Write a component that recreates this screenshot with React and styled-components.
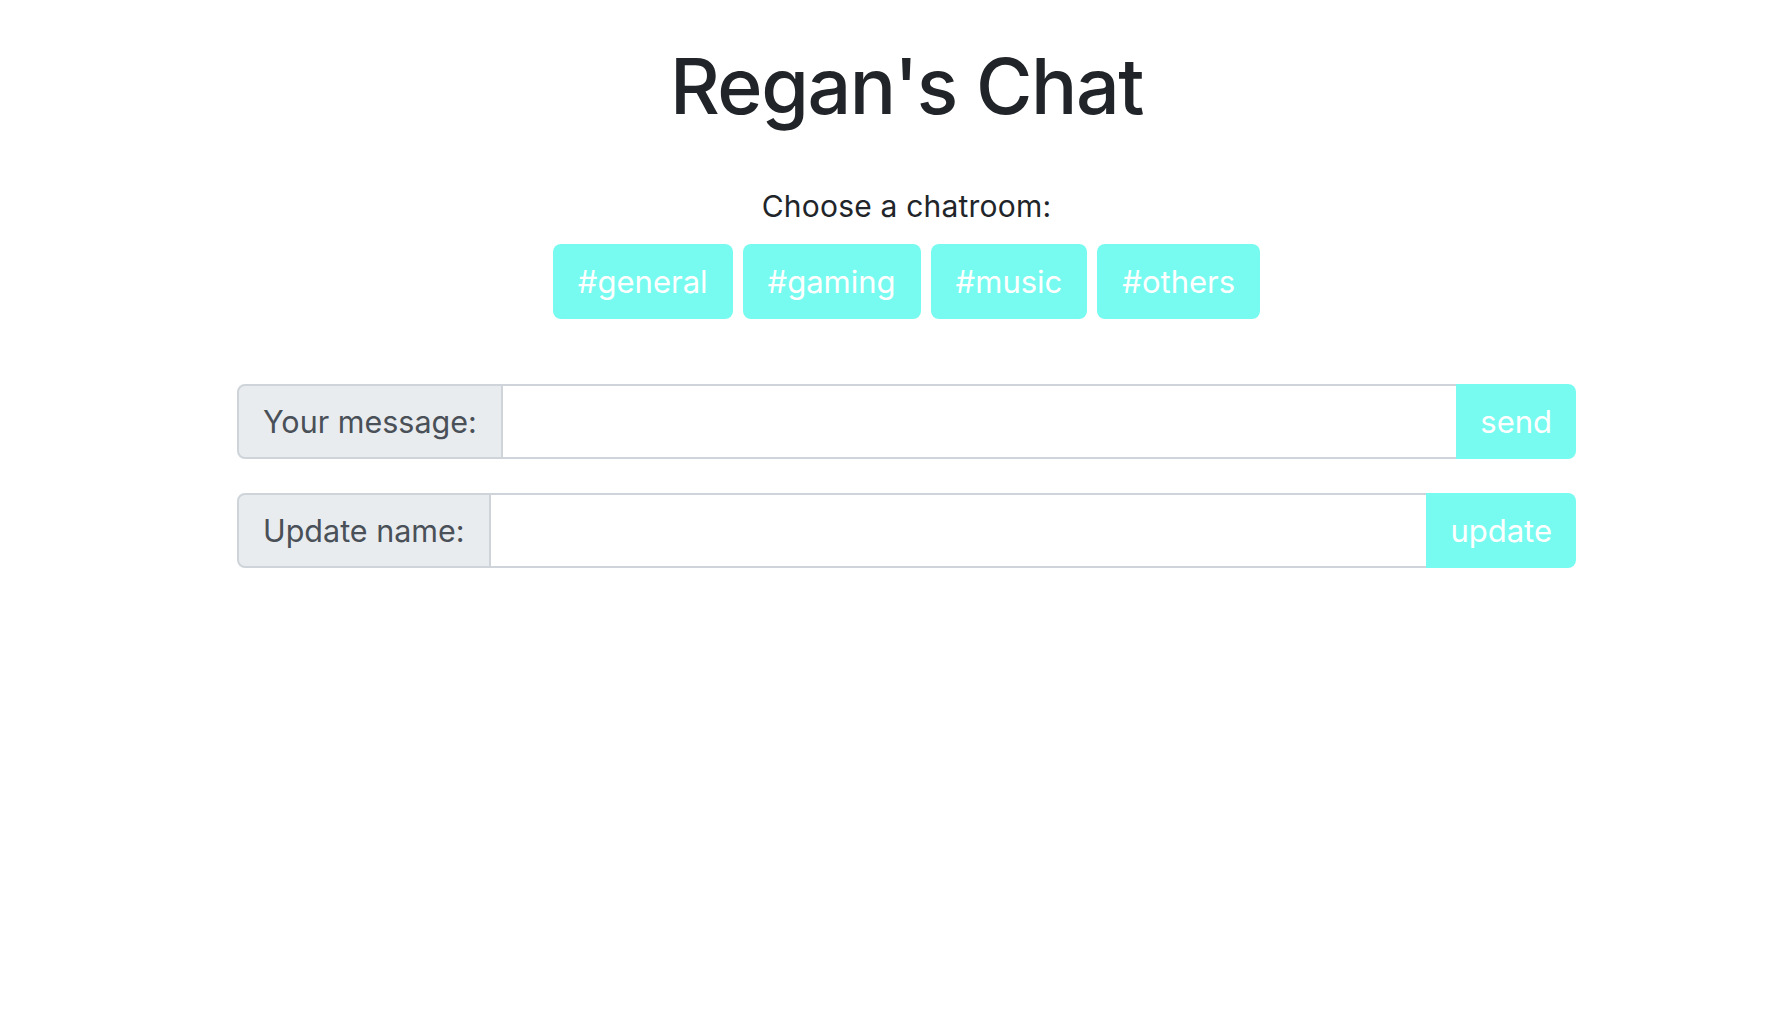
import React, { useState } from 'react';
import styled, { createGlobalStyle } from 'styled-components';

const GlobalStyle = createGlobalStyle`
  html, body {
    margin: 0;
    padding: 0;
    background: #fff;
  }
  body {
    font-family: Inter, "Noto Sans", "Liberation Sans", sans-serif;
    color: #212529;
  }
  * {
    box-sizing: border-box;
  }
`;

const accent = '#77fbf0';

const Page = styled.div`
  padding-left: 25px;
  text-align: center;
`;

const Title = styled.h1`
  margin: 0;
  padding-top: 39px;
  font-size: 77px;
  font-weight: 500;
  line-height: 94px;
  letter-spacing: -1.4px;
  color: #212529;
`;

const Subtitle = styled.p`
  margin: 52px 0 0;
  font-size: 30px;
  line-height: 42px;
  font-weight: 400;
  letter-spacing: 0.2px;
`;

const RoomList = styled.div`
  display: flex;
  justify-content: center;
  gap: 10px;
  margin-top: 17px;
`;

const RoomButton = styled.button`
  height: 75px;
  padding: 0 25px;
  border: none;
  border-radius: 8px;
  background: ${accent};
  color: #fff;
  font-family: inherit;
  font-size: 31px;
  font-weight: 400;
  cursor: pointer;
`;

const Form = styled.div`
  width: 1339px;
  margin: 65px auto 0;
  display: flex;
  flex-direction: column;
  gap: 34px;
`;

const InputGroup = styled.div`
  display: flex;
  height: 75px;
`;

const GroupLabel = styled.span`
  display: flex;
  align-items: center;
  padding: 0 24px;
  background: #e9ecef;
  border: 2px solid #ced4da;
  border-radius: 8px 0 0 8px;
  color: #495057;
  font-size: 30.5px;
  white-space: nowrap;
`;

const GroupInput = styled.input`
  flex: 1;
  min-width: 0;
  border: 2px solid #ced4da;
  border-left: none;
  border-right: none;
  background: #fff;
  font-family: inherit;
  font-size: 30.5px;
  padding: 0 24px;
  outline: none;
`;

const GroupButton = styled.button`
  padding: 0 24px;
  border: none;
  border-radius: 0 8px 8px 0;
  background: ${accent};
  color: #fff;
  font-family: inherit;
  font-size: 31px;
  cursor: pointer;
`;

const rooms = ['#general', '#gaming', '#music', '#others'];

const App = () => {
  const [message, setMessage] = useState('');
  const [name, setName] = useState('');

  return (
    <Page>
      <GlobalStyle />
      <Title>Regan's Chat</Title>
      <Subtitle>Choose a chatroom:</Subtitle>
      <RoomList>
        {rooms.map((room) => (
          <RoomButton key={room}>{room}</RoomButton>
        ))}
      </RoomList>
      <Form>
        <InputGroup>
          <GroupLabel>Your message:</GroupLabel>
          <GroupInput value={message} onChange={(e) => setMessage(e.target.value)} />
          <GroupButton>send</GroupButton>
        </InputGroup>
        <InputGroup>
          <GroupLabel>Update name:</GroupLabel>
          <GroupInput value={name} onChange={(e) => setName(e.target.value)} />
          <GroupButton>update</GroupButton>
        </InputGroup>
      </Form>
    </Page>
  );
};

export default App;
